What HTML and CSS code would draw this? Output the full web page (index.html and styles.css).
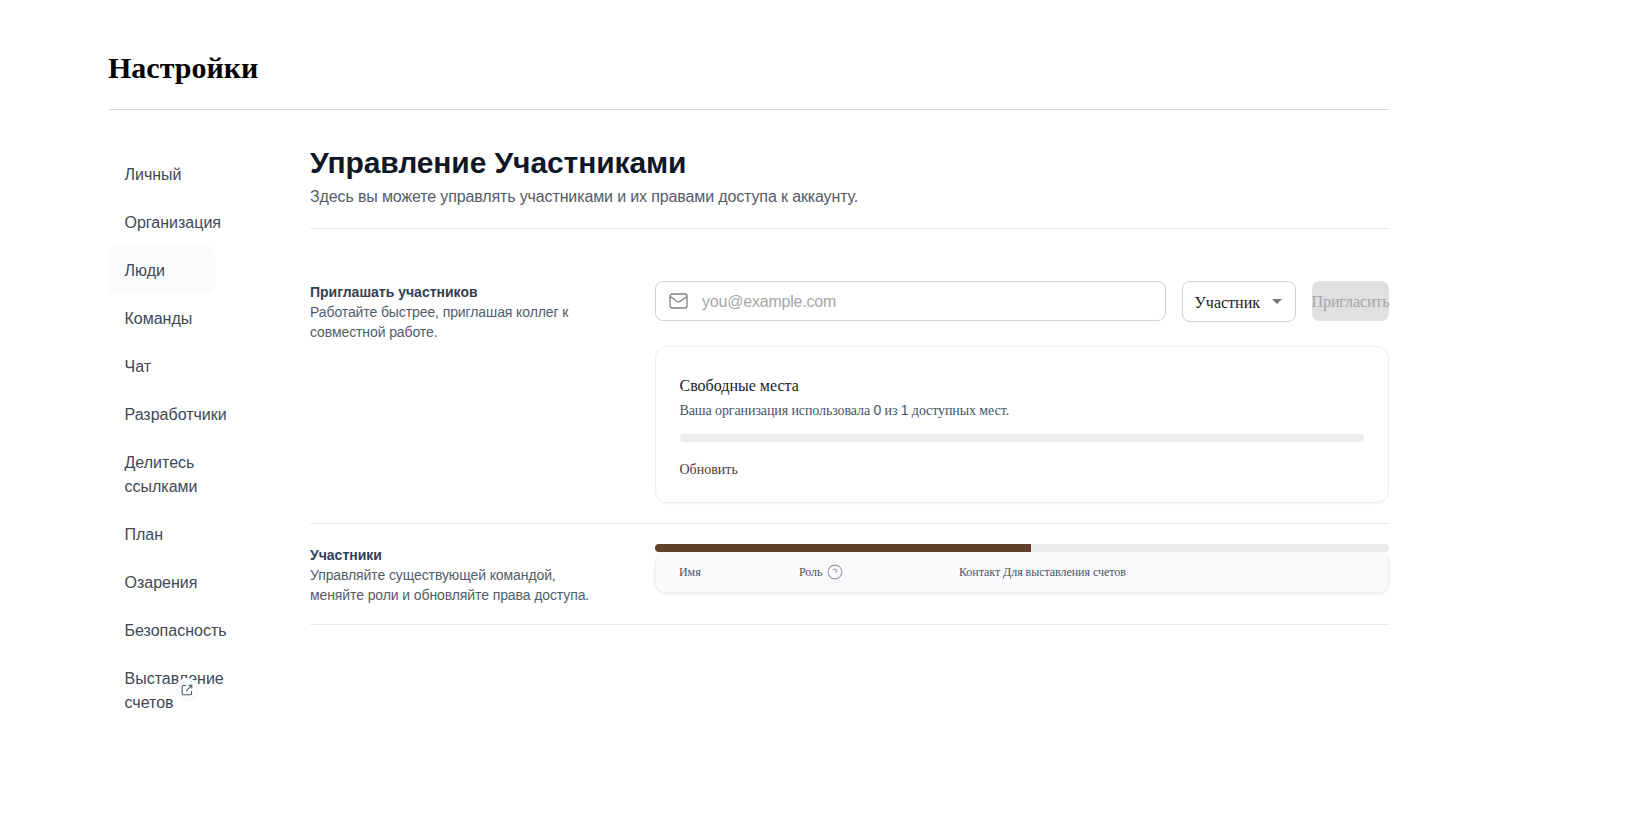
FILE: index.html
```html
<!DOCTYPE html>
<html lang="ru">
<head>
<meta charset="utf-8">
<title>Настройки</title>
<link rel="stylesheet" href="styles.css">
</head>
<body>
<div class="page">
  <header class="page-header"><h1 class="page-title">Настройки</h1></header>
  <div class="columns">
    <nav class="nav">
      <a class="nav-item">Личный</a>
      <a class="nav-item">Организация</a>
      <a class="nav-item active">Люди</a>
      <a class="nav-item">Команды</a>
      <a class="nav-item">Чат</a>
      <a class="nav-item">Разработчики</a>
      <a class="nav-item">Делитесь<br>ссылками</a>
      <a class="nav-item">План</a>
      <a class="nav-item">Озарения</a>
      <a class="nav-item">Безопасность</a>
      <a class="nav-item">Выставление<br>счетов
        <span class="external"><svg width="12" height="12" viewBox="0 0 12 12" fill="none" stroke="#525865" stroke-width="1.1"><path d="M5 1.5H2.2a1 1 0 0 0-1 1v7.3a1 1 0 0 0 1 1h7.3a1 1 0 0 0 1-1V7M7.5 1.2h3.3v3.3M10.6 1.4 5.2 6.8"/></svg></span>
      </a>
    </nav>
    <main class="main">
      <div class="intro">
        <h2 class="heading">Управление Участниками</h2>
        <p class="subtitle">Здесь вы можете управлять участниками и их правами доступа к аккаунту.</p>
      </div>
      <section class="section invite">
        <div class="label">
          <h3 class="label-title">Приглашать участников</h3>
          <p class="label-text">Работайте быстрее, приглашая коллег к<br>совместной работе.</p>
        </div>
        <div class="content">
          <div class="form">
            <div class="input">
              <svg width="20" height="17" viewBox="0 0 20 17" fill="none" stroke="#7d8289" stroke-width="1.3"><rect x="1" y="1" width="17" height="14" rx="2.2"/><path d="M1.3 3.6 8.2 8.5a2.3 2.3 0 0 0 2.6 0l7-4.9"/></svg>
              <span class="placeholder">you@example.com</span>
            </div>
            <div class="select"><span class="select-text">Участник</span><span class="caret"></span></div>
            <button class="submit" disabled><span class="submit-text">Пригласить</span></button>
          </div>
          <div class="card">
            <div class="card-title">Свободные места</div>
            <div class="card-text">Ваша организация использовала <span class="num">0</span> из <span class="num">1</span> доступных мест.</div>
            <div class="seats"></div>
            <a class="upgrade">Обновить</a>
          </div>
        </div>
      </section>
      <section class="section members">
        <div class="label">
          <h3 class="label-title">Участники</h3>
          <p class="label-text">Управляйте существующей командой,<br>меняйте роли и обновляйте права доступа.</p>
        </div>
        <div class="content">
          <div class="progress"><div class="progress-value"></div></div>
          <div class="table-head">
            <span class="th">Имя</span>
            <span class="th">Роль
              <svg width="16" height="16" viewBox="0 0 16 16" fill="none" stroke="#989ca3" stroke-width="1.1"><circle cx="8" cy="8" r="6.9"/><path d="M6.1 6.2C6.4 4.9 9.7 4.7 9.9 6.6c0 1.1-1.1 1.3-1.8 1.7"/></svg>
            </span>
            <span class="th">Контакт Для выставления счетов</span>
          </div>
        </div>
      </section>
    </main>
  </div>
</div>
</body>
</html>
```
FILE: styles.css
```css
* { box-sizing: border-box; }
body { margin: 0; background: #fff; font-family: "Liberation Sans", Arial, sans-serif; }
h1, h2, h3, p { margin: 0; }
.page { width: 1280px; margin-left: 109px; padding-top: 48px; white-space: nowrap; }
.page-header { height: 62px; border-bottom: 1px solid #d3d5d8; }
.page-title { margin-left: -1px; font: bold 30px/40px "Liberation Serif", serif; color: #000; }
.columns { display: grid; grid-template-columns: 201px 1079px; }
.nav { padding-top: 40px; }
.nav-item { display: block; position: relative; width: 106px; padding: 13px 16px 11px 15.5px; font-size: 16px; line-height: 24px; color: #414854; }
.nav-item.active { background: #fafbfd; border-radius: 6px; }
.external { position: absolute; left: 66px; top: 24px; width: 24px; height: 24px; border-radius: 50%; background: #f9fafb; display: flex; align-items: center; justify-content: center; }
.main { padding-top: 35px; }
.intro { height: 84px; border-bottom: 1px solid #e9ebed; }
.heading { font-size: 30px; line-height: 36px; letter-spacing: -0.1px; color: #101828; }
.subtitle { margin-top: 4px; font-size: 16px; line-height: 24px; letter-spacing: -0.13px; color: #535c68; }
.section { display: grid; grid-template-columns: 345px 734px; border-bottom: 1px solid #e9ebed; }
.invite { padding: 52px 0 20px; }
.members { padding: 20px 0 19px; }
.label { padding-top: 1px; }
.label-title { font-size: 14px; line-height: 20px; color: #344054; }
.label-text { font-size: 14px; line-height: 20px; letter-spacing: -0.1px; color: #535c68; }
.form { display: flex; gap: 16px; height: 41px; align-items: flex-start; }
.input { width: 511px; height: 40px; display: flex; align-items: center; gap: 13px; padding-left: 13px; border: 1px solid #cdd0d5; border-radius: 8px; }
.placeholder { padding-top: 2px; font-size: 16px; letter-spacing: -0.2px; color: #a6a6a6; }
.select { width: 114px; height: 41px; display: flex; align-items: center; justify-content: space-between; padding: 2px 13px 0 11.5px; border: 1px solid #cdd0d5; border-radius: 8px; }
.select-text { font: 16px/20px "Liberation Serif", serif; color: #202124; }
.caret { border: 5px solid transparent; border-top-color: #757575; border-bottom: 0; margin-top: -2px; }
.submit { width: 77px; height: 40px; display: flex; align-items: center; justify-content: center; padding: 2px 0 0; border: 0; border-radius: 8px; background: #e0e0e0; }
.submit-text { font: 16px/20px "Liberation Serif", serif; letter-spacing: -0.1px; color: #a6a6a6; }
.card { height: 157px; margin-top: 24px; padding: 27px 24px 0 23.5px; border: 1px solid #eceef0; border-radius: 12px; box-shadow: 0 1px 2px #1018280a; font-family: "Liberation Serif", serif; }
.card-title { font-size: 16px; line-height: 24px; color: #202124; }
.card-text { font-size: 14px; line-height: 24px; letter-spacing: -0.1px; color: #475467; }
.num { font-family: "Liberation Sans", sans-serif; }
.seats { height: 8px; margin-top: 11px; border-radius: 4px; background: #ebecee; }
.upgrade { display: block; margin-top: 18px; font-size: 14px; line-height: 20px; color: #573a30; }
.progress { height: 8px; border-radius: 4px; overflow: hidden; background: #ebecee; }
.progress-value { width: 376px; height: 8px; background: #633f2d; }
.table-head { height: 41px; display: grid; grid-template-columns: 120px 160px 1fr; padding: 0 24px 1px 23px; align-items: center; background: #f9fafc; border: 1px solid #f0f1f4; border-top: 0; border-radius: 10px; box-shadow: 0 1px 3px #1018281a; }
.th { display: flex; align-items: center; gap: 5px; font: 12px/18px "Liberation Serif", serif; letter-spacing: -0.05px; color: #475467; }
```
